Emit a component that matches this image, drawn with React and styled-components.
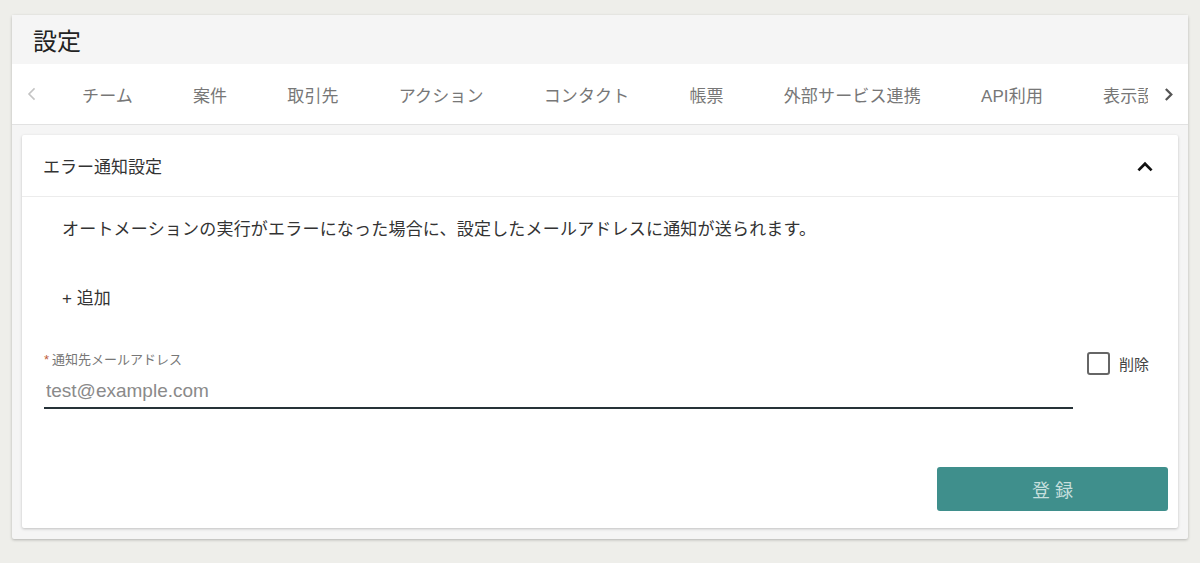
import React from 'react'
import styled, { createGlobalStyle } from 'styled-components'

const GlobalStyle = createGlobalStyle`
  body {
    margin: 0;
    background: #eeeeea;
    font-family: "Liberation Sans", "Noto Sans CJK JP", sans-serif;
    color: #333;
  }
`

const tabs = ['チーム', '案件', '取引先', 'アクション', 'コンタクト', '帳票', '外部サービス連携', 'API利用', '表示設定']

const Chevron = ({ dir, color, size = 14, width = 2.4 }) => {
  const d = {
    left: 'M10 3 L5 8 L10 13',
    right: 'M6 3 L11 8 L6 13',
    up: 'M3 11 L8 6 L13 11',
  }[dir]
  return (
    <svg width={size} height={size} viewBox="0 0 16 16">
      <path d={d} fill="none" stroke={color} strokeWidth={width} strokeLinecap="square" />
    </svg>
  )
}

const App = () => {
  return (
    <>
      <GlobalStyle />
      <Page>
        <Card>
          <Header>設定</Header>
          <TabBar>
            <Arrow>
              <Chevron dir="left" color="#c4c4c4" size={16} width={1.6} />
            </Arrow>
            <TabScroller>
              {tabs.map((t) => (
                <Tab key={t}>{t}</Tab>
              ))}
            </TabScroller>
            <Arrow>
              <Chevron dir="right" color="#555" size={15} width={2.4} />
            </Arrow>
          </TabBar>
          <Body>
            <Panel>
              <PanelHeader>
                エラー通知設定
                <Chevron dir="up" color="#111" size={18} width={2.4} />
              </PanelHeader>
              <PanelBody>
                <Description>
                  オートメーションの実行がエラーになった場合に、設定したメールアドレスに通知が送られます。
                </Description>
                <AddButton>+ 追加</AddButton>
                <FieldRow>
                  <Field>
                    <Label>
                      <Required>*</Required>通知先メールアドレス
                    </Label>
                    <Input defaultValue="" placeholder="test@example.com" />
                  </Field>
                  <CheckLabel>
                    <Box />
                    削除
                  </CheckLabel>
                </FieldRow>
                <Footer>
                  <Submit>登 録</Submit>
                </Footer>
              </PanelBody>
            </Panel>
          </Body>
        </Card>
      </Page>
    </>
  )
}

export default App

const Page = styled.div`
  padding: 15px 12px 24px;
`

const Card = styled.div`
  background: #f5f5f5;
  box-shadow: 0 1px 3px rgba(0, 0, 0, 0.25);
  border-radius: 2px;
`

const Header = styled.div`
  height: 49px;
  display: flex;
  align-items: center;
  padding-left: 21px;
  font-size: 24px;
  color: #222;
  background: #f5f5f5;
`

const TabBar = styled.div`
  display: flex;
  height: 60px;
  background: #fff;
  border-bottom: 1px solid #e2e2e2;
`

const Arrow = styled.div`
  width: 40px;
  flex: none;
  display: flex;
  align-items: center;
  justify-content: center;
`

const TabScroller = styled.div`
  flex: 1;
  display: flex;
  overflow: hidden;
  white-space: nowrap;
`

const Tab = styled.div`
  flex: none;
  display: flex;
  align-items: center;
  padding: 0 30px;
  font-size: 17px;
  letter-spacing: 0.15px;
  color: #777;
`

const Body = styled.div`
  padding: 10px 10px 11px;
`

const Panel = styled.div`
  background: #fff;
  box-shadow: 0 1px 3px rgba(0, 0, 0, 0.22);
  border-radius: 2px;
`

const PanelHeader = styled.div`
  height: 61px;
  display: flex;
  align-items: center;
  justify-content: space-between;
  padding: 0 24px 0 21px;
  font-size: 17px;
  color: #333;
  border-bottom: 1px solid #ececec;
`

const PanelBody = styled.div`
  padding: 21px 10px 17px 22px;
`

const Description = styled.p`
  margin: 0 0 0 18px;
  font-size: 17px;
  letter-spacing: 0.2px;
  line-height: 24px;
  color: #333;
`

const AddButton = styled.button`
  display: block;
  margin: 45px 0 0 18px;
  padding: 0;
  border: none;
  background: none;
  font-family: inherit;
  font-size: 17px;
  line-height: 24px;
  color: #333;
`

const FieldRow = styled.div`
  display: flex;
  align-items: flex-start;
  margin-top: 41px;
`

const Field = styled.div`
  width: 1029px;
`

const Label = styled.div`
  font-size: 13px;
  line-height: 16px;
  color: #777;
`

const Required = styled.span`
  color: #c0603a;
  margin-right: 3px;
`

const Input = styled.input`
  display: block;
  width: 100%;
  box-sizing: border-box;
  margin-top: 8px;
  padding: 4px 2px 5px;
  border: none;
  border-bottom: 2px solid #263238;
  outline: none;
  font-family: "Liberation Sans", "Noto Sans CJK JP", sans-serif;
  font-size: 19px;
  line-height: 22px;
  color: #333;
  caret-color: #333;
  &::placeholder {
    color: #8a8a8a;
  }
`

const CheckLabel = styled.label`
  display: flex;
  align-items: center;
  gap: 9px;
  margin: 0 0 0 14px;
  font-size: 15px;
  color: #444;
`

const Box = styled.span`
  width: 19px;
  height: 19px;
  border: 2px solid #666;
  border-radius: 3px;
  flex: none;
`

const Footer = styled.div`
  display: flex;
  justify-content: flex-end;
  margin-top: 58px;
`

const Submit = styled.button`
  width: 231px;
  height: 44px;
  border: none;
  border-radius: 3px;
  background: #3f8f8c;
  color: #c6dfdd;
  font-family: "Liberation Sans", "Noto Sans CJK JP", sans-serif;
  font-size: 18px;
`
